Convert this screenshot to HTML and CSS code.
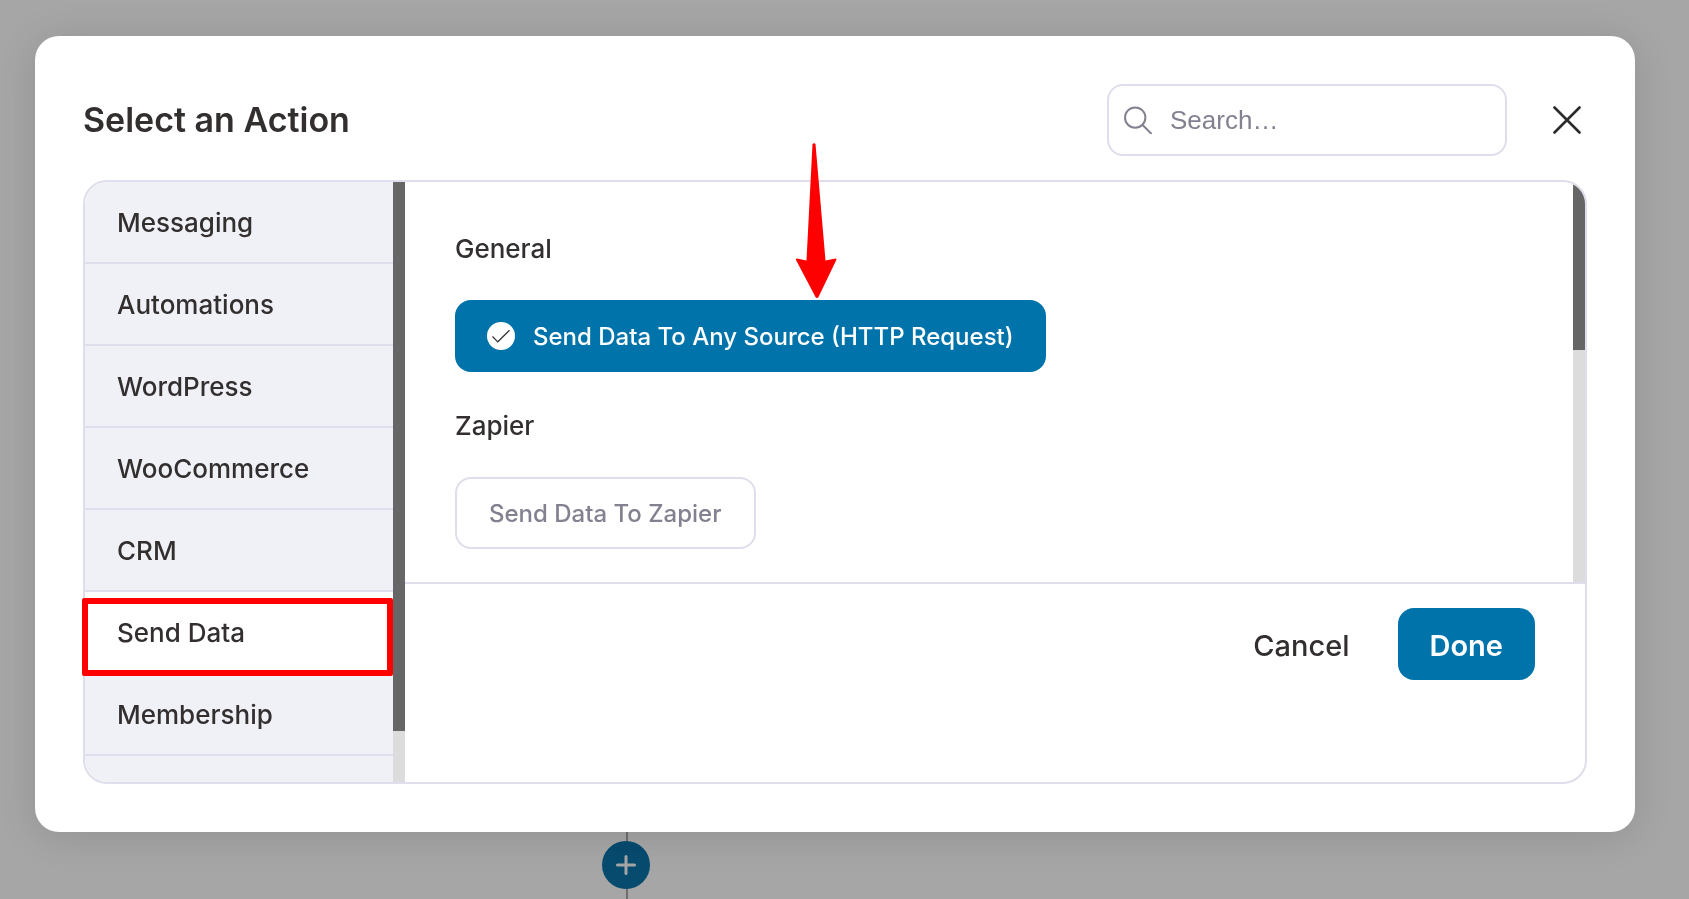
FILE: index.html
```html
<!DOCTYPE html>
<html lang="en">
<head>
    <meta charset="UTF-8">
    <meta name="viewport" content="width=device-width, initial-scale=1.0">
    <title>Select an Action</title>
    <link rel="stylesheet" href="styles.css">
</head>
<body>
    <!-- Workflow canvas behind the dialog -->
    <div class="canvas" aria-hidden="true">
        <div class="connector"></div>
        <div class="add-step">
            <svg width="20" height="20" viewBox="0 0 20 20"><path d="M10 1.5v17M1.5 10h17" stroke="#a6a6a6" stroke-width="3" stroke-linecap="round"/></svg>
        </div>
    </div>

    <div class="overlay">
        <div class="modal" role="dialog" aria-labelledby="modalTitle">
            <header class="modal-header">
                <h1 id="modalTitle">Select an Action</h1>
                <div class="search">
                    <svg class="search-icon" width="28" height="28" viewBox="0 0 28 28" fill="none" stroke="#83818f" stroke-width="2" stroke-linecap="round"><circle cx="11.2" cy="11.6" r="10.2"/><path d="M18.600 19l8.400 8.400"/></svg>
                    <input type="text" id="searchInput" placeholder="Search…" aria-label="Search">
                </div>
                <button class="close" aria-label="Close">
                    <svg width="28" height="28" viewBox="0 0 28 28" fill="none" stroke="#2d2a2a" stroke-width="2.6" stroke-linecap="round"><path d="M1.5 1.5l25 25M26.5 1.5l-25 25"/></svg>
                </button>
            </header>

            <div class="panel">
                <nav class="sidebar">
                    <ul class="categories">
                        <li><a href="#messaging">Messaging</a></li>
                        <li><a href="#automations">Automations</a></li>
                        <li><a href="#wordpress">WordPress</a></li>
                        <li><a href="#woocommerce">WooCommerce</a></li>
                        <li><a href="#crm">CRM</a></li>
                        <li><a class="active" href="#send-data">Send Data</a></li>
                        <li><a href="#membership">Membership</a></li>
                    </ul>
                    <div class="scrollbar"><div class="thumb thumb-sidebar"></div></div>
                </nav>

                <section class="main">
                    <div class="content">
                        <div class="groups">
                            <h2>General</h2>
                            <button class="option selected">
                                <svg width="28" height="28" viewBox="0 0 28 28" fill="none"><circle cx="14" cy="14" r="14" fill="#fff"/><path d="M5.500 14.500l5.300 5.300L22.500 8.200" stroke="#333" stroke-width="1.200"/></svg>
                                Send Data To Any Source (HTTP Request)
                            </button>
                            <h2>Zapier</h2>
                            <button class="option">Send Data To Zapier</button>
                        </div>
                        <div class="scrollbar"><div class="thumb thumb-content"></div></div>
                    </div>
                    <footer class="actions">
                        <button class="cancel">Cancel</button>
                        <button class="done">Done</button>
                    </footer>
                </section>
            </div>

            <!-- Callouts -->
            <div class="callout-box"></div>
            <svg class="callout-arrow" width="42" height="156" viewBox="0 0 42 156" fill="#f00"><path d="M17.500 1q1.500-1.500 3 0L30.500 117.500l10-2q1.500 0 .8 1.500L23.500 154q-1.500 2-3 0L1 117q-.5-1.500 1-1.500l9.500 2z"/></svg>
        </div>
    </div>
</body>
</html>
```
FILE: styles.css
```css
* {
    box-sizing: border-box;
}
body {
    margin: 0;
    font-family: Inter, "Liberation Sans", sans-serif;
    font-weight: 500;
    color: #332f2f;
    background-color: #a6a6a6;
}
h1, h2, ul {
    margin: 0;
    padding: 0;
    font-weight: 500;
}
button, input {
    font: inherit;
    color: inherit;
    padding: 0;
    border: none;
    background: none;
}
button {
    cursor: pointer;
}
svg {
    display: block;
    flex: none;
}

/* canvas */
.canvas {
    position: fixed;
    inset: 0;
    overflow: hidden;
}
.connector {
    position: absolute;
    left: 626px;
    bottom: 0;
    width: 2px;
    height: 120px;
    background-color: #6e6e6e;
}
.add-step {
    position: absolute;
    left: 602px;
    bottom: 10px;
    width: 48px;
    height: 48px;
    border-radius: 50%;
    background-color: #074b6f;
    display: flex;
    align-items: center;
    justify-content: center;
}

/* modal */
.overlay {
    position: relative;
    display: flex;
    height: 100vh;
    padding: 36px 54px 67px 35px;
}
.modal {
    position: relative;
    flex: 1;
    display: flex;
    flex-direction: column;
    padding: 48px;
    border-radius: 24px;
    background-color: #fff;
    box-shadow: 0 4px 40px rgba(0, 0, 0, 0.12);
}
.modal-header {
    display: flex;
    align-items: center;
    margin-bottom: 24px;
}
.modal-header h1 {
    flex: 1;
    font-size: 34px;
    font-weight: 600;
    line-height: 48px;
}
.search {
    display: flex;
    align-items: center;
    gap: 18px;
    width: 400px;
    height: 72px;
    padding: 0 15px;
    border: 2px solid #dedeec;
    border-radius: 16px;
}
.search input {
    flex: 1;
    min-width: 0;
    font-family: "Liberation Sans", Arial, sans-serif;
    font-size: 26px;
    font-weight: 400;
    outline: none;
}
.search input::placeholder {
    color: #83818f;
    opacity: 1;
}
.close {
    margin: 0 6px 0 46px;
}

.panel {
    flex: 1;
    min-height: 0;
    display: flex;
    border: 2px solid #dedeec;
    border-radius: 24px;
    overflow: hidden;
}
.sidebar {
    display: flex;
    width: 320px;
    background-color: #f0f1f7;
}
.categories {
    flex: 1;
    list-style: none;
}
.categories a {
    display: block;
    padding: 2px 32px 0;
    font-size: 26px;
    line-height: 78px;
    color: inherit;
    text-decoration: none;
    border-bottom: 2px solid #dedeec;
}
.categories a.active {
    background-color: #fff;
}
.scrollbar {
    width: 12px;
    background-color: #dcdcdc;
}
.thumb {
    background-color: #666;
}
.thumb-sidebar {
    height: 91.5%;
}
.thumb-content {
    height: 42%;
}

.main {
    flex: 1;
    display: flex;
    flex-direction: column;
}
.content {
    flex: 1;
    min-height: 0;
    display: flex;
    border-bottom: 2px solid #dedeec;
}
.groups {
    flex: 1;
    padding: 50px;
}
.groups h2 {
    margin-bottom: 34px;
    font-size: 26px;
    line-height: 34px;
}
.option {
    display: flex;
    align-items: center;
    gap: 18px;
    height: 72px;
    margin-bottom: 37px;
    padding: 0 32px;
    border: 2px solid #dedeec;
    border-radius: 16px;
    font-size: 24px;
    color: #83818f;
}
.option.selected {
    padding: 0 30px;
    border-color: #0073aa;
    background-color: #0073aa;
    color: #fff;
}
.actions {
    display: flex;
    justify-content: flex-end;
    align-items: flex-start;
    gap: 48px;
    padding: 24px 50px 102px;
}
.actions button {
    height: 72px;
    padding-top: 2px;
    font-size: 29px;
}
.actions .done {
    padding: 2px 32px 0;
    border-radius: 16px;
    background-color: #0073aa;
    color: #fff;
    font-weight: 600;
}

/* callouts */
.callout-box {
    position: absolute;
    left: 47px;
    top: 562px;
    width: 311px;
    height: 78px;
    border: 6px solid #f00;
    border-radius: 2px;
}
.callout-arrow {
    position: absolute;
    left: 760px;
    top: 107px;
}
```
